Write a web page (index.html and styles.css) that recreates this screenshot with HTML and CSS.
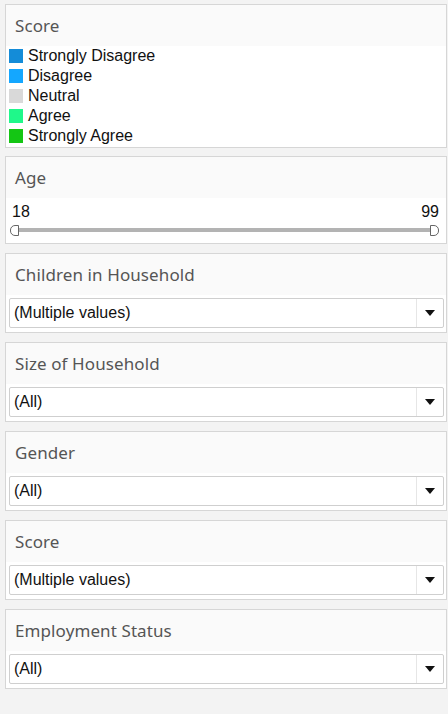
FILE: index.html
```html
<!DOCTYPE html>
<html>
<head>
<meta charset="utf-8">
<link rel="stylesheet" href="styles.css">
</head>
<body>
<div class="sidebar">
  <section class="panel legend-panel">
    <div class="panel-title">Score</div>
    <ul class="legend">
      <li><span class="swatch sd"></span>Strongly Disagree</li>
      <li><span class="swatch d"></span>Disagree</li>
      <li><span class="swatch n"></span>Neutral</li>
      <li><span class="swatch a"></span>Agree</li>
      <li><span class="swatch sa"></span>Strongly Agree</li>
    </ul>
  </section>

  <section class="panel range-panel">
    <div class="panel-title">Age</div>
    <div class="range">
      <div class="range-values"><span>18</span><span>99</span></div>
      <div class="slider">
        <span class="handle handle-left"></span>
        <span class="track"></span>
        <span class="handle handle-right"></span>
      </div>
    </div>
  </section>

  <section class="panel drop-panel">
    <div class="panel-title">Children in Household</div>
    <div class="drop-wrap"><div class="dropdown"><span class="drop-value">(Multiple values)</span><span class="drop-btn"><span class="arrow"></span></span></div></div>
  </section>

  <section class="panel drop-panel">
    <div class="panel-title">Size of Household</div>
    <div class="drop-wrap"><div class="dropdown"><span class="drop-value">(All)</span><span class="drop-btn"><span class="arrow"></span></span></div></div>
  </section>

  <section class="panel drop-panel">
    <div class="panel-title">Gender</div>
    <div class="drop-wrap"><div class="dropdown"><span class="drop-value">(All)</span><span class="drop-btn"><span class="arrow"></span></span></div></div>
  </section>

  <section class="panel drop-panel">
    <div class="panel-title">Score</div>
    <div class="drop-wrap"><div class="dropdown"><span class="drop-value">(Multiple values)</span><span class="drop-btn"><span class="arrow"></span></span></div></div>
  </section>

  <section class="panel drop-panel">
    <div class="panel-title">Employment Status</div>
    <div class="drop-wrap"><div class="dropdown"><span class="drop-value">(All)</span><span class="drop-btn"><span class="arrow"></span></span></div></div>
  </section>
</div>
</body>
</html>
```

FILE: styles.css
```css
html, body {
  margin: 0;
  padding: 0;
  background: #f3f3f3;
}
body {
  width: 448px;
  height: 714px;
  font-family: "Liberation Sans", Arial, sans-serif;
  color: #111;
}
.sidebar {
  display: flex;
  flex-direction: column;
  padding: 4px 0 0 5px;
}
.panel {
  width: 440px;
  border: 1px solid #d6d6d6;
  background: #fff;
  box-sizing: content-box;
}
.legend-panel { margin-bottom: 8px; }
.range-panel { margin-bottom: 9px; }
.drop-panel { margin-bottom: 9px; }

.panel-title {
  height: 41px;
  background: #fafafa;
  padding-left: 9px;
  display: flex;
  align-items: center;
  font-family: "Noto Sans", "Open Sans", sans-serif;
  font-size: 17px;
  color: #555;
  letter-spacing: 0.1px;
}
.legend {
  list-style: none;
  margin: 0;
  padding: 0 0 1px 3px;
}
.legend li {
  height: 20px;
  display: flex;
  align-items: center;
  font-size: 16px;
  color: #111;
}
.swatch {
  width: 14px;
  height: 14px;
  margin-right: 5px;
  flex: none;
}
.sd { background: #148cd8; }
.d { background: #14a7ff; }
.n { background: #d9d9d9; }
.a { background: #1ff88a; }
.sa { background: #14c614; }

.range {
  height: 45px;
  padding: 0 7px 0 4px;
}
.range-values {
  display: flex;
  justify-content: space-between;
  font-size: 16px;
  padding: 5px 0 0 2px;
  height: 18px;
  line-height: 18px;
}
.slider {
  display: flex;
  align-items: center;
  margin-top: 3px;
  height: 12px;
}
.track {
  flex: 1;
  height: 4px;
  background: #b3b3b3;
}
.handle {
  width: 7px;
  height: 9px;
  border: 1px solid #666;
  background: #fff;
  flex: none;
}
.handle-left {
  border-radius: 5px 0 0 5px;
}
.handle-right {
  border-radius: 0 5px 5px 0;
}

.drop-wrap {
  padding: 3px 2px 4px 3px;
}
.dropdown {
  height: 28px;
  border: 1px solid #cfcfcf;
  border-radius: 2px;
  display: flex;
  align-items: center;
  background: #fff;
}
.drop-value {
  flex: 1;
  font-size: 16px;
  padding-left: 4px;
  color: #111;
}
.drop-btn {
  width: 26px;
  align-self: stretch;
  border-left: 1px solid #e6e6e6;
  display: flex;
  align-items: center;
  justify-content: center;
}
.arrow {
  width: 0;
  height: 0;
  border-left: 5px solid transparent;
  border-right: 5px solid transparent;
  border-top: 6px solid #111;
}
```
